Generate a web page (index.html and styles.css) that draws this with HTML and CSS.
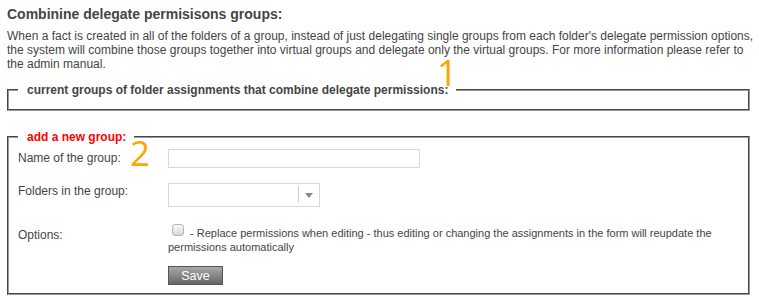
FILE: index.html
```html
<!DOCTYPE html>
<html lang="en">
<head>
<meta charset="UTF-8" />
<title>Combine delegate permissions groups</title>
<link rel="stylesheet" href="styles.css">
</head>
<body>

<h2>Combinine delegate permisisons groups:</h2>
<p class="intro">When a fact is created in all of the folders of a group, instead of just delegating single groups from each folder's delegate permission options, the system will combine those groups together into virtual groups and delegate only the virtual groups. For more information please refer to the admin manual.</p>

<fieldset class="box current">
  <legend>current groups of folder assignments that combine delegate permissions:</legend>
  <span class="marker marker-1">1</span>
  <div class="empty"></div>
</fieldset>

<fieldset class="box add">
  <legend>add a new group:</legend>
  <span class="marker marker-2">2</span>
  <div class="form">
    <label class="row-label name-label" for="groupName">Name of the group:</label>
    <div class="row-field"><input type="text" id="groupName" class="text-input"></div>

    <label class="row-label folders-label">Folders in the group:</label>
    <div class="row-field">
      <div class="select">
        <span class="select-arrow"></span>
      </div>
    </div>

    <label class="row-label options-label">Options:</label>
    <div class="row-field options">
      <span class="checkbox"></span> - Replace permissions when editing - thus editing or changing the assignments in the form will reupdate the permissions automatically
    </div>

    <div></div>
    <div class="row-field"><button class="save">Save</button></div>
  </div>
</fieldset>

</body>
</html>
```

FILE: styles.css
```css
body {
  font-family: "Liberation Sans", Arial, sans-serif;
  margin: 6px 4px 0 7px;
  color: #444;
  background: #fff;
}

h2 {
  font-size: 14px;
  margin: 0;
  line-height: 17px;
}

.intro {
  font-size: 12px;
  line-height: 14px;
  margin: 6px 0 0 0;
}

.box {
  position: relative;
  margin: 0 5px 0 0;
  border: 2px groove #9a9a9a;
  padding: 0 9px;
  min-width: 0;
}

.box legend {
  font-size: 12px;
  font-weight: bold;
  padding: 0 8px 0 9px;
  margin-left: 0;
  line-height: 14px;
}

.current {
  margin-top: 12px;
}

.empty {
  height: 12px;
}

.add {
  margin-top: 19px;
  padding-bottom: 8px;
}

.add legend {
  color: #f00;
}

.marker {
  position: absolute;
  color: #ffa500;
  font-family: "Open Sans", sans-serif;
  font-weight: 400;
  font-size: 36px;
  line-height: 1;
}

.marker-1 {
  left: 428px;
  top: -42px;
}

.marker-2 {
  left: 121px;
  top: -9px;
  font-size: 35px;
}

.form {
  display: grid;
  grid-template-columns: 150px 1fr;
  font-size: 12px;
  line-height: 14px;
}

.name-label {
  padding-top: 7px;
}

.folders-label {
  padding-top: 1px;
}

.options-label {
  padding-top: 4px;
}

.text-input {
  display: block;
  width: 252px;
  height: 19px;
  box-sizing: border-box;
  border: 1px solid #d7d7d7;
  margin: 5px 0 15px;
}

.select {
  position: relative;
  width: 152px;
  height: 24px;
  box-sizing: border-box;
  border: 1px solid #d7d7d7;
  margin-bottom: 17px;
}

.select-arrow {
  position: absolute;
  right: 0;
  top: 2px;
  width: 20px;
  height: 17px;
  border-left: 1px solid #ccc;
}

.select-arrow::after {
  content: "";
  position: absolute;
  left: 6px;
  top: 7px;
  border-left: 4px solid transparent;
  border-right: 4px solid transparent;
  border-top: 5px solid #888;
}

.options {
  font-size: 11px;
  line-height: 13.5px;
}

.checkbox {
  display: inline-block;
  width: 10px;
  height: 10px;
  margin: 0 3px 0 4px;
  border: 1px solid #b5b5b5;
  border-radius: 3px;
  background: linear-gradient(#fafafa, #d8d8d8);
  vertical-align: 1px;
}

.save {
  display: block;
  margin-top: 12px;
  width: 55px;
  height: 19px;
  padding: 0;
  font-family: "Liberation Sans", Arial, sans-serif;
  font-size: 12.5px;
  color: #fff;
  border: 1px solid #555;
  background: linear-gradient(#a8a8a8, #666);
}
```
